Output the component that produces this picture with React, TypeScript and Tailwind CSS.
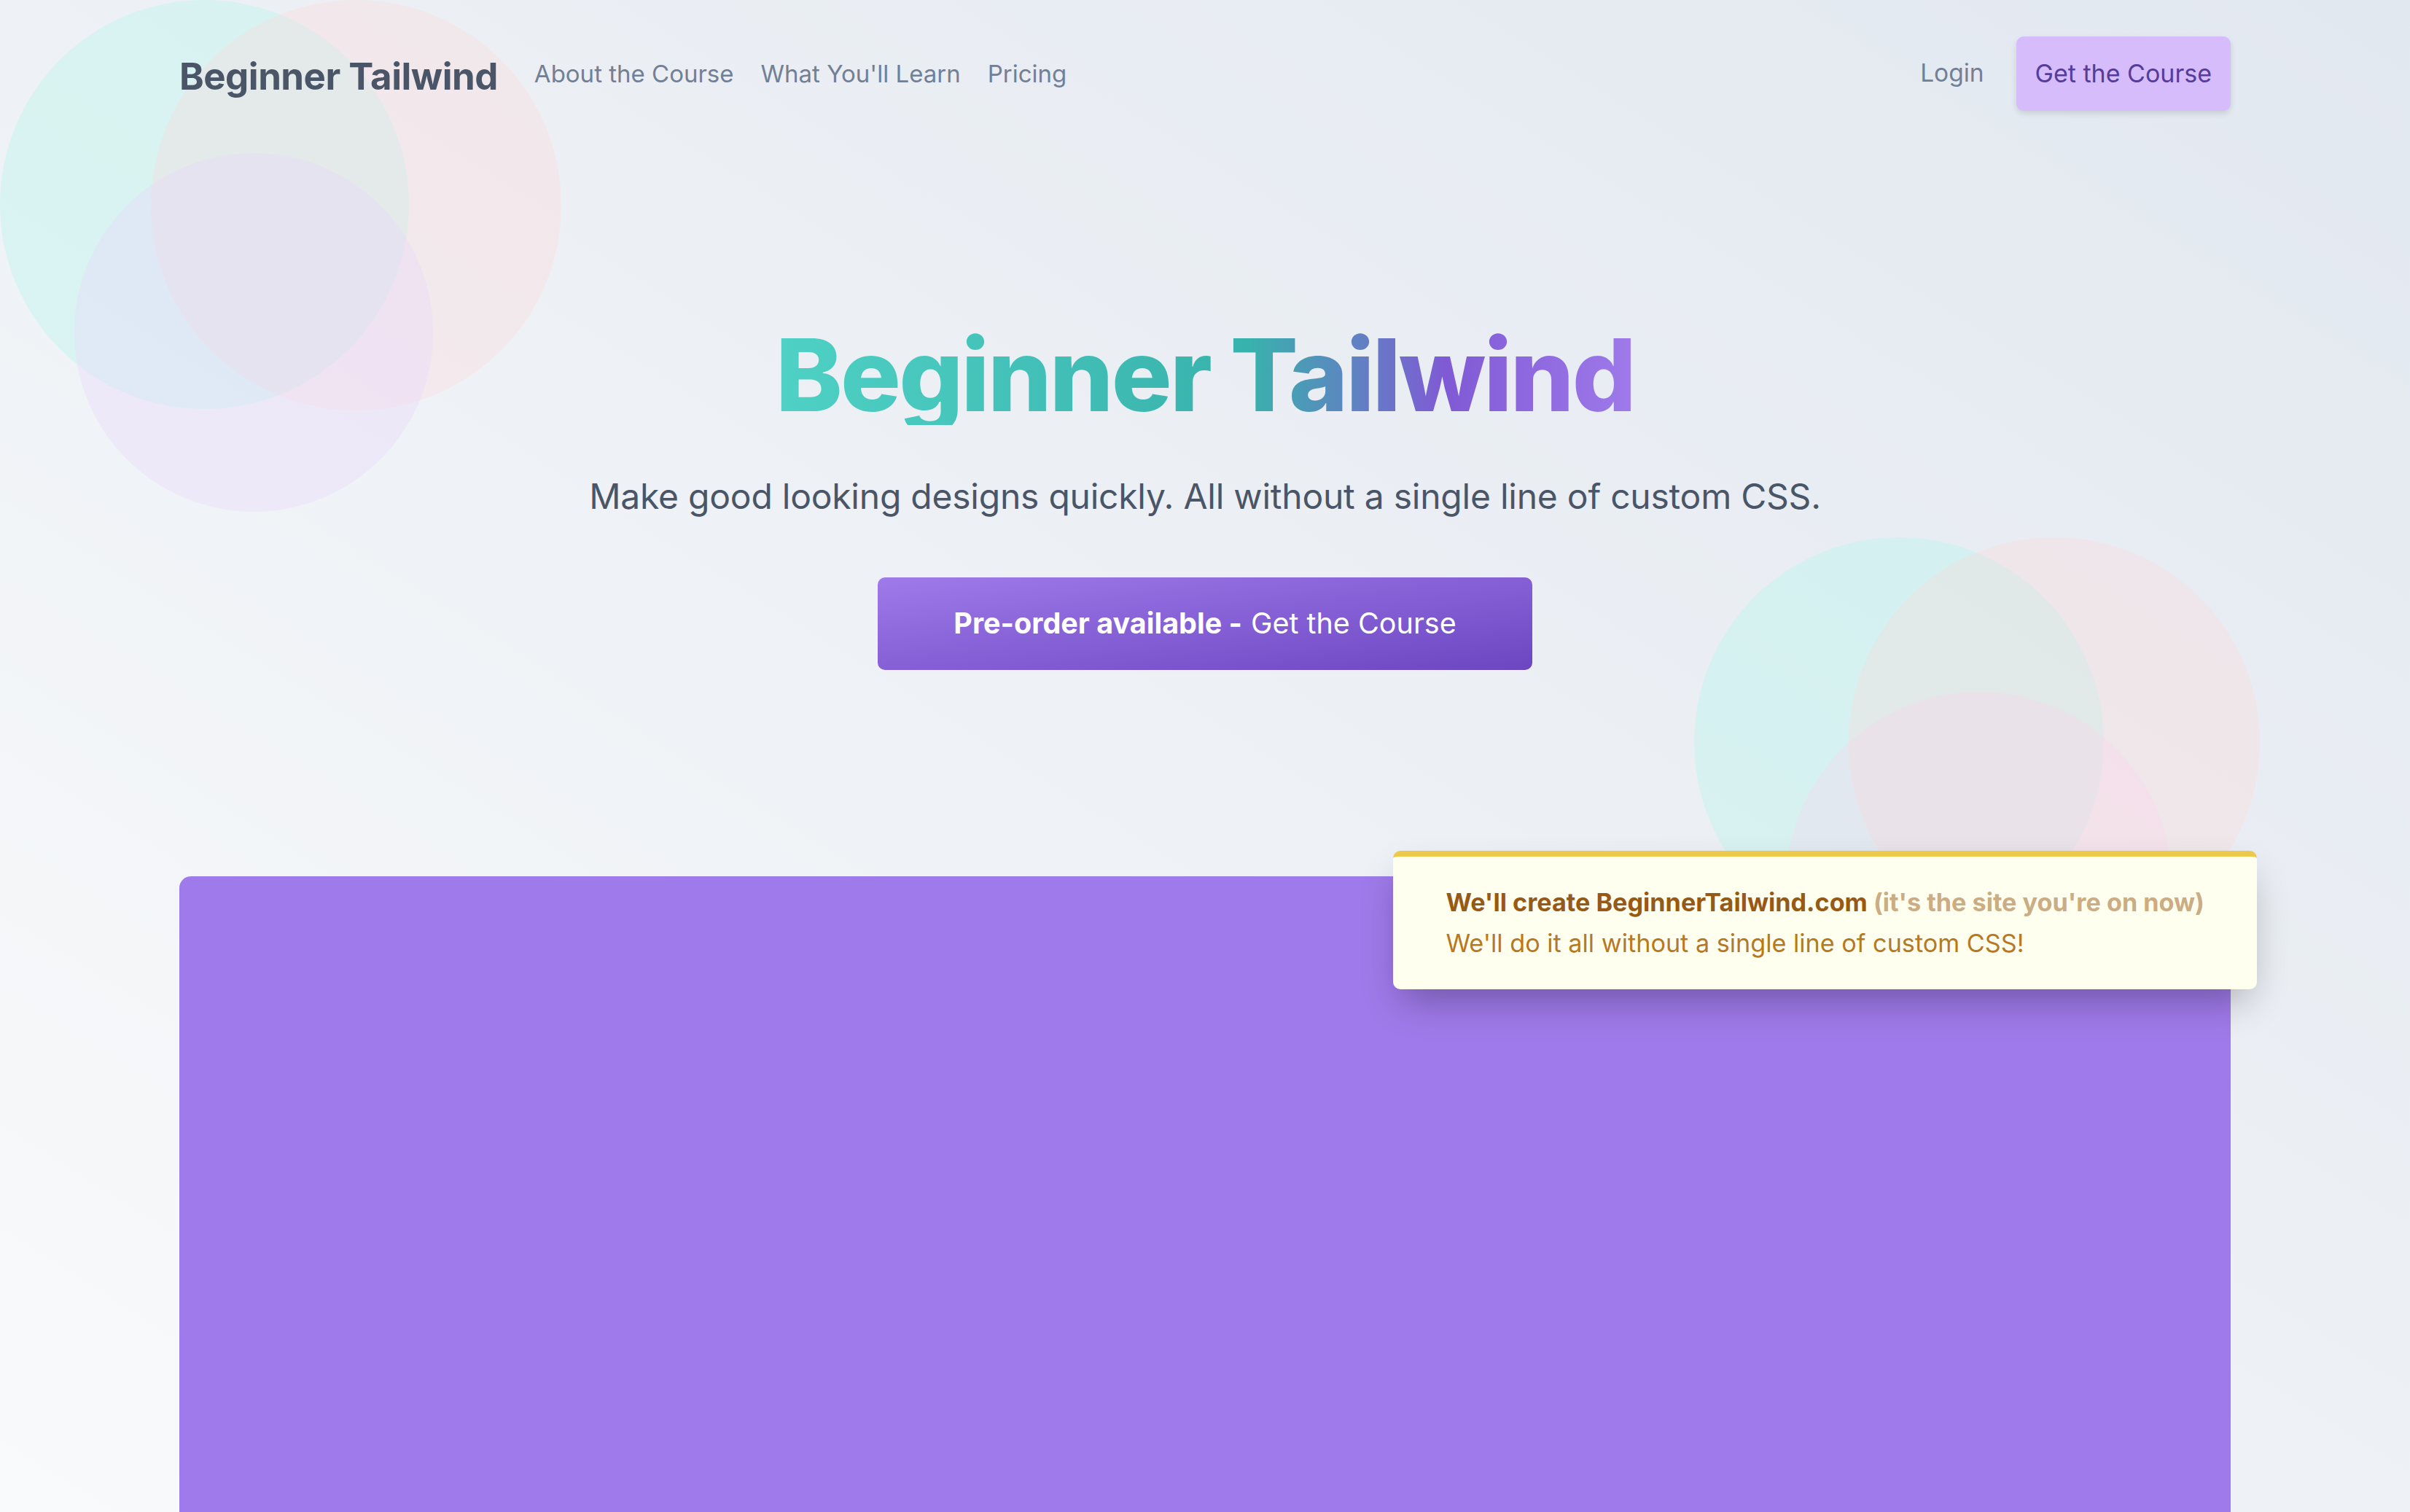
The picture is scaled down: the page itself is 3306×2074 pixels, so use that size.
export default function App() {
  return (
    <div className="relative h-[2074px] w-full overflow-hidden bg-[linear-gradient(to_top_right,#f9fafb,#e2e8f0)] font-['Inter',sans-serif]">
      {/* decorative blobs, top-left group */}
      <div className="pointer-events-none absolute left-0 top-0 h-[561px] w-[561px] rounded-full bg-[#b2f5ea] opacity-35" />
      <div className="pointer-events-none absolute left-[207px] top-0 h-[563px] w-[563px] rounded-full bg-[#fed7d7] opacity-30" />
      <div className="pointer-events-none absolute left-[102px] top-[210px] h-[492px] w-[492px] rounded-full bg-[#e9d8fd] opacity-35" />
      {/* decorative blobs, right group */}
      <div className="pointer-events-none absolute left-[2324px] top-[737px] h-[562px] w-[562px] rounded-full bg-[#b2f5ea] opacity-35" />
      <div className="pointer-events-none absolute left-[2536px] top-[737px] h-[564px] w-[564px] rounded-full bg-[#fed7d7] opacity-30" />
      <div className="pointer-events-none absolute left-[2450px] top-[949px] h-[530px] w-[530px] rounded-full bg-[#fbd5ec] opacity-30" />

      <div className="relative">
        <header className="mx-auto flex w-[2814px] items-center justify-between pt-[50px]">
          <div className="flex items-center">
            <span className="mt-[6px] text-[51px] font-bold leading-none tracking-[-0.01em] text-[#4a5568]">
              Beginner Tailwind
            </span>
            <nav className="ml-[50px] flex items-center gap-[37px] text-[33px] leading-none text-[#718096]">
              <a>About the Course</a>
              <a>What You'll Learn</a>
              <a>Pricing</a>
            </nav>
          </div>
          <div className="flex items-center">
            <a className="text-[33.5px] leading-none text-[#718096]">Login</a>
            <a className="ml-[44px] flex h-[102px] items-center rounded-[10px] bg-[#d6bcfa] px-[26px] text-[34px] leading-none text-[#553c9a] shadow-[0_4px_8px_rgba(0,0,0,0.12)]">
              Get the Course
            </a>
          </div>
        </header>

        <section className="flex flex-col items-center text-center">
          <h1 className="mt-[293px] inline-block bg-[linear-gradient(to_right,#4fd1c5_0%,#38b2ac_55%,#805ad5_78%,#9f7aea_100%)] bg-clip-text text-[138px] font-extrabold leading-none tracking-[-0.02em] text-transparent">
            Beginner Tailwind
          </h1>
          <p className="mt-[74px] text-[48px] leading-none tracking-[-0.005em] text-[#4a5568]">
            Make good looking designs quickly. All without a single line of custom CSS.
          </p>
          <a className="mt-[87px] flex h-[127px] w-[898px] items-center justify-center rounded-[10px] bg-[linear-gradient(to_bottom_right,#9f7aea,#6b46c1)] text-[39.5px] leading-none text-white">
            <span className="font-bold">Pre-order available -</span>
            <span className="ml-[12px]">Get the Course</span>
          </a>
        </section>

        <div className="relative mx-auto mt-[283px] h-[900px] w-[2814px] rounded-t-[16px] bg-[#9f7aea]">
          <div className="absolute right-[-36px] top-[-35px] rounded-[10px] border-t-[8px] border-[#ecc94b] bg-[#fffff0] px-[72px] py-[35px] text-[34.2px] leading-[56px] shadow-[0_25px_50px_-12px_rgba(0,0,0,0.3)]">
            <p className="font-bold text-[#975a16]">
              We'll create BeginnerTailwind.com{" "}
              <span className="text-[#cbac83]">(it's the site you're on now)</span>
            </p>
            <p className="text-[#b7791f]">We'll do it all without a single line of custom CSS!</p>
          </div>
        </div>
      </div>
    </div>
  );
}
